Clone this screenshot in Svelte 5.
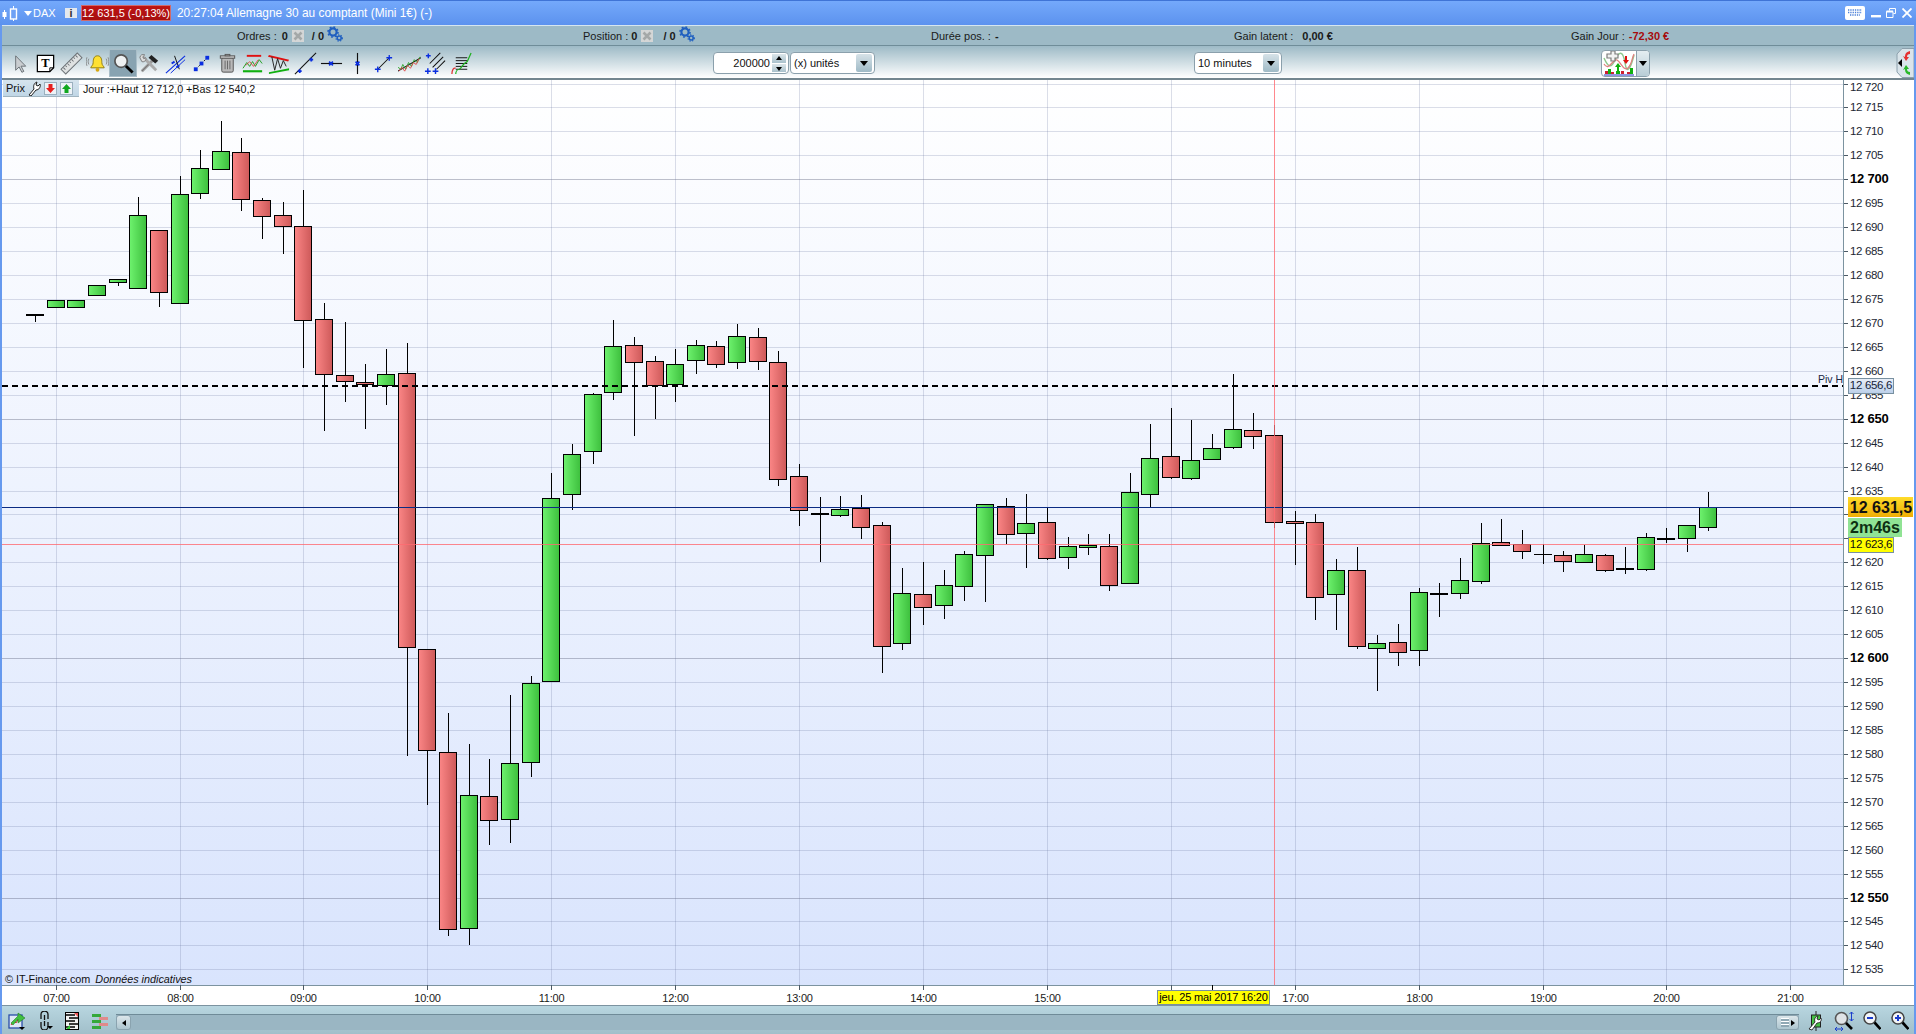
<script>
const candles = [
['d',26,315,315,315,322,35.3],
['g',47.3,300.3,307.7],['g',67.3,300.3,307.7],['g',88.3,285.3,295.7],
['g',109.3,279.3,282.7,279,286,118.3],
['g',129.3,215.3,288.7,197.3,288,138.3],
['r',150.3,230.3,292.7,230,306.7,159.3],
['g',171.3,194.3,303.7,176,303,180.7],
['g',191.3,168.3,193.3,150,199,200.3],
['g',212.3,151.3,169.7,121,169,221.3],
['r',232.3,152.3,199.7,138,211,241.3],
['r',253.3,200.3,216.7,198,239,262.3],
['r',274.3,215.3,226.7,202,254,283.3],
['r',294.3,226.3,320.7,190,368,303.3],
['r',315.3,319.3,374.7,303,431,324.3],
['r',336.3,375.3,381.7,322,402,345.3],
['r',356.3,382.3,384.7,364,429,365.3],
['g',377.3,374.3,385.7,349,405,386.3],
['r',398.3,373.3,647.3,343,755.7,407.3],
['r',418.3,649.3,750.7,649,804.7,427.3],
['r',439.3,752.3,929.7,713,935.7,448.3],
['g',460.3,795.3,928.7,744,944.7,469.3],
['r',480.3,796.3,820.7,759,844.7,489.3],
['g',501.3,763.3,819.7,695,842.7,510.3],
['g',522.3,683.3,762.7,676,776.7,531.3],
['g',542.3,498.3,681.3,473,681,551.3],
['g',563.3,454.3,494.7,444,510,572.3],
['g',584.3,394.3,451.7,393,464,593.3],
['g',604.3,346.3,392.3,320,400,613.3],
['r',625.3,345.3,362.7,337,436,634.3],
['r',646.3,361.3,385.7,356,419,655.3],
['g',666.3,364.3,384.7,349,402,675.3],
['g',687.3,345.3,360.7,340,374,696.3],
['r',707.3,346.3,364.7,341,368,716.3],
['g',728.3,336.3,362.7,324,369,737.3],
['r',749.3,337.3,361.7,328,370,758.3],
['r',769.3,362.3,479.7,351,486,778.3],
['r',790.3,476.3,510.7,464,526,799.3],
['d',811,513.7,513.7,497,562,820.3],
['g',831.3,509.3,515.7,496,517,840.3],
['r',852.3,508,527.7,495,539,861.3],
['r',873.3,525.3,646.7,522,672.7,882.3],
['g',893.3,593.3,643.7,568,650,902.3],
['r',914.3,594.3,607.7,562,625,923.3],
['g',935.3,585.3,605.7,570,619,944.3],
['g',955.3,554.3,586.7,551,601,964.3],
['g',976.3,504.3,555.7,504,602,985.3],
['r',997.3,506.3,534.7,498,544,1006.3],
['g',1017.3,523.3,533.7,494,568,1026.3],
['r',1038.3,522.3,558.7,507,560,1047.3],
['g',1059.3,546.3,557.7,537,569,1068.3],
['g',1079.3,545.3,547.7,534,555,1088.3],
['r',1100.3,546.3,585.7,534,591,1109.3],
['g',1121.3,492.3,583.7,473,583,1130.3],
['g',1141.3,458.3,494.7,424,507,1150.3],
['r',1162.3,456.3,477.7,408,479,1171.3],
['g',1182.3,460.3,478.7,420,480,1191.3],
['g',1203.3,448.3,459.7,434,459,1212.3],
['g',1224.3,429.3,447.7,374,449,1233.3],
['r',1244.3,430.3,436.7,413,449,1253.3],
['r',1265.3,435.3,522.7,425,528,1274.3],
['r',1286.3,521.3,523.7,511,565,1295.3],
['r',1306.3,522.3,597.7,514,620,1315.3],
['g',1327.3,570.3,594.7,559,630,1336.3],
['r',1348.3,570.3,646.7,547,649,1357.3],
['g',1368.3,643.3,648.7,635,690.7,1377.3],
['r',1389.3,642.3,652.7,624,666,1398.3],
['g',1410.3,592.3,650.7,588,666,1419.3],
['d',1430,594,594,583,617,1439.3],
['g',1451.3,580.3,593.7,558,599,1460.3],
['g',1472.3,543.3,581.7,523,584,1481.3],
['r',1492.3,542.3,545.7,519,545,1501.3],
['r',1513.3,544.3,551.7,530,559,1522.3],
['t',1534,554.3,554.3,544,564,1543.3],
['r',1554.3,555.3,561.7,551,572,1563.3],
['g',1575.3,554.3,562.7,545,562,1584.3],
['r',1596.3,555.3,570.7,554,572,1605.3],
['d',1616,569,569,547,574,1625.3],
['g',1637.3,537.3,569.7,533,571,1646.3],
['d',1657,539,539,528,543,1666.3],
['g',1678.3,525.3,538.7,525,552,1687.3],
['g',1699.3,507.3,527.7,492,531,1708.3]
];
const f = (v) => Math.floor(v) + 0.5;
const hours = [[56,'07:00'],[180,'08:00'],[303,'09:00'],[427,'10:00'],[551,'11:00'],[675,'12:00'],[799,'13:00'],[923,'14:00'],[1047,'15:00'],[1171,''],[1295,'17:00'],[1419,'18:00'],[1543,'19:00'],[1666,'20:00'],[1790,'21:00']];
const prices = [];
for (let p = 12720; p >= 12535; p -= 5) {
  const s = String(p);
  prices.push({ p, y: Math.round(179.3 + ((12700 - p) / 5) * 23.94), bold: p % 50 === 0, hidden: p === 12630 || p === 12625, label: s.slice(0, 2) + ' ' + s.slice(2) });
}
</script>

{#snippet gear()}
<svg class="gear" width="16" height="16" viewBox="0 0 16 16"><circle cx="6" cy="6" r="3.6" fill="none" stroke="#1f5fc0" stroke-width="2.2"/><circle cx="6" cy="6" r="5" fill="none" stroke="#1f5fc0" stroke-width="1.6" stroke-dasharray="1.8 2.1"/><circle cx="12.2" cy="12" r="2" fill="none" stroke="#1f5fc0" stroke-width="1.6"/><circle cx="12.2" cy="12" r="3.2" fill="none" stroke="#1f5fc0" stroke-width="1.1" stroke-dasharray="1.3 1.4"/></svg>
{/snippet}
{#snippet xbox()}
<svg width="12" height="12" viewBox="0 0 12 12"><rect width="12" height="12" fill="#d4d6d6"/><path d="M2.500 2.500 9.500 9.500M9.500 2.500 2.500 9.500" stroke="#a4a8a8" stroke-width="2.600"/></svg>
{/snippet}
{#snippet combo()}
<span class="dd"><i></i></span>
{/snippet}

<div class="app">
  <header class="title">
    <svg class="t-ic" width="17" height="18" viewBox="0 0 17 18"><path d="M2.500 6v9" stroke="#fff"/><rect x="0.500" y="8" width="4" height="5" fill="#fff"/><path d="M11.500 2v15" stroke="#fff"/><rect x="8.500" y="5" width="6" height="10" fill="#6ea1f5" stroke="#fff" stroke-width="1.400"/></svg>
    <svg class="t-arrow" width="8" height="5" viewBox="0 0 8 5"><path d="M0 0h8L4 5z" fill="#fff"/></svg>
    <span class="dax">DAX</span>
    <span class="info-i">i</span>
    <span class="pricebox">12 631,5 (-0,13%)</span>
    <span class="t-text">20:27:04 Allemagne 30 au comptant (Mini 1€) (-)</span>
    <span class="t-right">
      <svg width="20" height="14" viewBox="0 0 20 14"><rect width="20" height="14" rx="2" fill="#fff"/><path d="M3 4h14M3 6.500h14M5 9h10" stroke="#4a7fd8" stroke-width="1.400" stroke-dasharray="1.300 1"/></svg>
      <svg class="wc1" width="10" height="10" viewBox="0 0 10 10"><rect y="7" width="10" height="2.400" fill="#fff"/></svg>
      <svg class="wc2" width="10" height="10" viewBox="0 0 10 10"><path d="M3.500 2.500V.5h6v5H7.500M.5 3.500h6.500v6H.5z" fill="none" stroke="#fff"/><path d="M.5 3.500h6.500" stroke="#fff" stroke-width="2"/></svg>
      <svg class="wc3" width="10" height="10" viewBox="0 0 10 10"><path d="M.5.5l9 9M9.500.5l-9 9" stroke="#fff" stroke-width="1.800"/></svg>
    </span>
  </header>

  <div class="frame">
    <div class="infobar">
      <div class="cell c1"><span>Ordres :</span><b class="n1">0</b>{@render xbox()}<b class="sl">/ 0</b>{@render gear()}</div>
      <div class="cell c2"><span>Position :</span><b class="n2">0</b>{@render xbox()}<b class="sl2">/ 0</b>{@render gear()}</div>
      <div class="cell c3"><span>Durée pos. :</span><b class="n3">-</b></div>
      <div class="cell c4"><span>Gain latent :</span><b class="n4">0,00 €</b></div>
      <div class="cell"><span>Gain Jour :</span><b class="n5">-72,30 €</b></div>
    </div>

    <div class="toolbar">
      <div class="tools">
        <div class="tool"><svg viewBox="0 0 24 24"><path d="M8 4v15l3.600-3.400 2.900 5.600 2-1-2.900-5.400H18.500z" fill="#c9cdd0" stroke="#6a7176"/></svg></div>
        <div class="tool"><svg viewBox="0 0 24 24"><path d="M3.500 3.500h17v13l-4 4h-13z" fill="#fff" stroke="#000" stroke-width="1.300"/><path d="M16.500 20.500v-4h4" fill="none" stroke="#000"/><text x="12" y="16" class="tt">T</text></svg></div>
        <div class="tool"><svg viewBox="0 0 24 24"><g transform="rotate(-45 12 12)"><rect x="0" y="8.500" width="24" height="7" fill="#dfe2e2" stroke="#6d7377"/><path d="M3 9v3M6 9v2M9 9v3M12 9v2M15 9v3M18 9v2M21 9v3" stroke="#6d7377"/></g></svg></div>
        <div class="tool"><svg viewBox="0 0 24 24"><path d="M12 4c-4 0-4.500 4-4.500 7 0 3-2.500 4-2.500 5.500h14c0-1.500-2.500-2.500-2.500-5.500 0-3-.5-7-4.500-7z" fill="#ffe032" stroke="#8d7a10"/><circle cx="12" cy="18.500" r="2" fill="#d8a810"/><path d="M3 7c-1 2-1 4 0 6M1 5.500c-1 3-1 6 0 9M21 7c1 2 1 4 0 6M23 5.500c1 3 1 6 0 9" stroke="#777" fill="none" stroke-width=".8"/></svg></div>
        <div class="tool active"><svg viewBox="0 0 24 24"><circle cx="9.500" cy="9.500" r="6.500" fill="#eef1f2" stroke="#555" stroke-width="1.800"/><path d="M14.500 14.500l7 7" stroke="#000" stroke-width="3"/></svg></div>
        <div class="tool"><svg viewBox="0 0 24 24"><path d="M4 20 17 7" stroke="#999" stroke-width="3"/><path d="M14 3l7 6-3 3-7-6z" fill="#222"/><path d="M5 5l14 14" stroke="#aaa" stroke-width="3"/><path d="M2 6c0-3 3-4 5-3L5 5l1 2 2-1c1 2-1 5-4 4z" fill="#ddd" stroke="#666" stroke-width=".8"/><path d="M4 20 11 13" stroke="#777" stroke-width="1"/></svg></div>
        <div class="tool"><svg viewBox="0 0 24 24"><path d="M2 22 22 4" stroke="#0a2ee0" stroke-width="1.200"/><path d="M7 22 22 8" stroke="#0a2ee0" stroke-width="1"/><path d="M11 4l5 14" stroke="#111"/><path d="M8 12l3-2M13 16l3-2" stroke="#0a2ee0" stroke-width="2"/></svg></div>
        <div class="tool"><svg viewBox="0 0 24 24"><path d="M6 18 18 6" stroke="#111" stroke-dasharray="2 2"/><rect x="4" y="16" width="4" height="4" fill="#0a2ee0"/><rect x="10" y="10" width="4" height="4" fill="#0a2ee0"/><rect x="16" y="4" width="4" height="4" fill="#0a2ee0"/></svg></div>
        <div class="tool"><svg viewBox="0 0 24 24"><rect x="6" y="6" width="12" height="15" rx="1.500" fill="#b9b9b9" stroke="#555"/><path d="M9.500 9v9M12 9v9M14.500 9v9" stroke="#666"/><rect x="4.500" y="4" width="15" height="2.500" fill="#ccc" stroke="#555"/><rect x="9.500" y="2.500" width="5" height="1.500" fill="#ccc" stroke="#555"/></svg></div>
        <div class="tool"><svg viewBox="0 0 24 24"><rect x="5" y="3" width="15" height="2" fill="#e01010"/><rect x="1" y="19" width="20" height="2.200" fill="#10b010"/><path d="M1 17l4-6 3 4 3-5 3 5 4-7 3 4" fill="none" stroke="#20a020"/><path d="M4 14l4-4 4 5 5-7" fill="none" stroke="#e04040" stroke-width=".9"/></svg></div>
        <div class="tool"><svg viewBox="0 0 24 24"><path d="M1 3l21 5-1 2L0 5z" fill="#e01010"/><path d="M1 21l21-4v2L1 23z" fill="#10b010"/><path d="M4 5l3 14 3-12 3 10 3-8 3 6" fill="none" stroke="#222"/></svg></div>
        <div class="tool"><svg viewBox="0 0 24 24"><path d="M1 23 23 1" stroke="#111" stroke-width="1.100"/><path d="M4 20h4M6 18v4M16 8h4M18 6v4" stroke="#0a2ee0" stroke-width="1.800"/></svg></div>
        <div class="tool"><svg viewBox="0 0 24 24"><path d="M1 12h22" stroke="#111" stroke-width="1.200"/><path d="M9.500 10l4 4M13.500 10l-4 4" stroke="#0a2ee0" stroke-width="1.800"/></svg></div>
        <div class="tool"><svg viewBox="0 0 24 24"><path d="M12 1v22" stroke="#111" stroke-width="1.200"/><path d="M10 10l4 4M14 10l-4 4" stroke="#0a2ee0" stroke-width="1.800"/></svg></div>
        <div class="tool"><svg viewBox="0 0 24 24"><path d="M6 18 18 6" stroke="#111" stroke-width="1.100"/><path d="M3 18h6M6 15v6M15 6h6M18 3v6" stroke="#0a2ee0" stroke-width="1.400"/></svg></div>
        <div class="tool"><svg viewBox="0 0 24 24"><path d="M0 20 24 6" stroke="#111" stroke-width="1.100"/><path d="M0 16l3 2 2-5 3 5 3-7 3 4 3-7 3 3 3-6" fill="none" stroke="#20a020" stroke-width=".9"/><path d="M1 20l3-4 3 4 3-6 3 3 3-6 3 2 3-6" fill="none" stroke="#e04040" stroke-width=".9"/></svg></div>
        <div class="tool"><svg viewBox="0 0 24 24"><path d="M6 12 17 1M9 16 20 5M13 18 22 9" stroke="#111" stroke-width="1.100"/><path d="M1 20h6M4 17v6M9 20h6M12 17v6M2 4h5M4.500 1.500v5" stroke="#0a2ee0" stroke-width="1.500"/></svg></div>
        <div class="tool"><svg viewBox="0 0 24 24"><path d="M6 6h12M6 9h12M6 12h12M6 15h12M6 18h12" stroke="#111"/><path d="M10 18c2-2 3-4 5-6l3-2 4-9" fill="none" stroke="#20b020" stroke-width="1.300"/><path d="M2 23c0-5 2-7 4-6" fill="none" stroke="#e03030" stroke-width="1.300"/><path d="M6 23c0-3 2-5 4-5" fill="none" stroke="#20b020" stroke-width="1.300"/></svg></div>
      </div>

      <div class="qty"><span class="qv">200000</span><span class="spin"><i class="up"></i><i class="down"></i></span></div>
      <div class="select s1"><span>(x) unités</span>{@render combo()}</div>
      <div class="select s2"><span>10 minutes</span>{@render combo()}</div>
      <div class="indic">
        <span class="ind-ic"><svg width="32" height="26" viewBox="0 0 32 26"><path d="M1 8C5 17 8 19 12 10s8-10 10 3 6 4 9-8" fill="none" stroke="#8fc98f" stroke-width="1.500"/><path d="M1 14C6 22 10 8 14 10s7 12 11 8 4-10 6-14" fill="none" stroke="#e08080" stroke-width="1.300"/><path d="M4 4h4V1h4v3h3v4h-3v3H8V8H4z" fill="#f2f2f2" stroke="#7c7c7c" stroke-width="1.200"/><path d="M12 17l3-4 3 4h-2v4h-2v-4z" fill="#10b010"/><path d="M22 6h2v4h2l-3 4-3-4h2z" fill="#e01010"/><path d="M2 21h3v3H2zM8 22h3v2H8zM18 21h3v3h-3zM24 22h3v2h-3z" fill="#d02030"/><path d="M5 19h3v5H5zM13 21h4v3h-4zM27 18h3v6h-3z" fill="#10b010"/><path d="M1 25h30" stroke="#2030c0"/></svg></span>
        <span class="ind-dd"><i></i></span>
      </div>
      <div class="sidetab"><svg width="18" height="30" viewBox="0 0 18 30"><path d="M6 .5h12v29H6L1 24V6z" fill="#d9e4ea" stroke="#8ca0ac"/><path d="M2 15l4-4v8z" fill="#000"/><path d="M14 3c-4 1-5 3-5 6l-2-1 3 5 3-4-2 0c0-2 1-3 3-3z" fill="#e53030"/><path d="M14 27c-4-1-5-3-5-6l-2 1 3-5 3 4-2 0c0 2 1 3 3 3z" fill="#28b828"/></svg></div>
    </div>

    <div class="chartrow">
      <div class="plot">
        <svg class="plotsvg" width="1841" height="905" viewBox="2 80 1841 905">
          <defs>
            <linearGradient id="gg"><stop offset="0" stop-color="#6ef26e"/><stop offset="1" stop-color="#3dbf3d"/></linearGradient>
            <linearGradient id="gr"><stop offset="0" stop-color="#fb8686"/><stop offset="1" stop-color="#cd5959"/></linearGradient>
          </defs>
          {#each prices as g}
            <line x1="2" x2="1843" y1={g.y + 0.5} y2={g.y + 0.5} class={g.bold ? 'gl b' : 'gl'} />
          {/each}
          {#each hours as h}
            <line x1={h[0] + 0.5} x2={h[0] + 0.5} y1="80" y2="985" class="gl" />
          {/each}
          {#each candles as c}
            {@const t = c[0]}
            {#if c[6]}
              <line x1={f(c[6])} x2={f(c[6])} y1={Math.floor(Math.min(c[4], c[2]))} y2={Math.ceil(Math.max(c[5], c[3]))} class="wick" />
            {/if}
            {#if t === 'd'}
              <rect x={Math.round(c[1])} y={Math.round(c[2]) - 1} width="18" height="2" fill="#000" />
            {:else if t === 't'}
              <rect x={Math.round(c[1])} y={Math.floor(c[2])} width="18" height="1" fill="#000" />
            {:else}
              <rect x={f(c[1])} y={f(c[2])} width="17" height={Math.max(f(c[3]) - f(c[2]), 1)} fill={t === 'g' ? 'url(#gg)' : 'url(#gr)'} class="body" />
            {/if}
          {/each}
          <line x1="2" x2="1843" y1="385.500" y2="385.500" class="pivot" />
          <line x1="2" x2="1843" y1="386.500" y2="386.500" class="pivot" />
          <line x1="2" x2="1843" y1="507.500" y2="507.500" class="last" />
          <line x1="2" x2="1843" y1="544.500" y2="544.500" class="pink" />
          <line x1="1274.500" x2="1274.500" y1="80" y2="985" class="pink" />
        </svg>

        <div class="legend">
          <div class="prix">
            <span>Prix</span>
            <svg class="wrench" width="13" height="15" viewBox="0 0 13 15"><path d="M1 14l5-6c-1-3 0-6 3-7l-1 3 2 1 2-2c1 3-1 6-4 6l-5 6z" fill="#fff" stroke="#222"/></svg>
            <span class="mini"><svg width="11" height="11" viewBox="0 0 11 11"><path d="M3.500 1h4v4H10L5.500 10 1 5h2.500z" fill="#e52020"/></svg></span>
            <span class="mini"><svg width="11" height="11" viewBox="0 0 11 11"><path d="M3.500 10h4V6H10L5.500 1 1 6h2.500z" fill="#10a820"/></svg></span>
          </div>
          <span class="leg-text">Jour :+Haut 12 712,0 +Bas 12 540,2</span>
        </div>
        <div class="copy">© IT-Finance.com <em>Données indicatives</em></div>
        <div class="piv">Piv H</div>
      </div>

      <div class="yaxis">
        <svg width="70" height="905" viewBox="1844 80 70 905">
          {#each prices as g}
            <line x1="1844" x2="1848" y1={g.y + 0.5} y2={g.y + 0.5} class="tick" />
            {#if !g.hidden}
              <text x="1850" y={(g.p === 12720 ? g.y + 3 : g.y) + (g.bold ? 4 : 3.5)} class={g.bold ? 'yl b' : 'yl'}>{g.label}</text>
            {/if}
          {/each}
        </svg>
        <div class="tag tag-piv">12 656,6</div>
        <div class="tag-last">12 631,5</div>
        <div class="tag-time">2m46s</div>
        <div class="tag tag-yel">12 623,6</div>
      </div>
    </div>

    <div class="xaxis">
      <svg width="1912" height="20" viewBox="2 985 1912 20">
        {#each hours as h}
          <line x1={h[0] + 0.5} x2={h[0] + 0.5} y1="985" y2="990" class="tick" />
          {#if h[1]}<text x={h[0] + 0.5} y="1002" class="xl">{h[1]}</text>{/if}
        {/each}
        <line x1="1212.500" x2="1212.500" y1="985" y2="990" stroke="#000" />
      </svg>
      <div class="datetip">jeu. 25 mai 2017 16:20</div>
    </div>

    <footer class="bottom">
      <div class="b-left">
        <svg width="18" height="19" viewBox="0 0 18 19"><rect x="1" y="4" width="13" height="13" fill="#dfe9f6" stroke="#2a4fa8" stroke-width="1.300"/><path d="M3 14l3-4 2 2 3-5" fill="none" stroke="#d03030"/><path d="M3 12 10 5V2l7 5-7 5V8l-5 6z" fill="#40c040" stroke="#208020" stroke-width=".6"/><path d="M11 16h6l-3 3z" fill="#000"/></svg>
        <svg class="b2" width="16" height="19" viewBox="0 0 16 19"><path d="M3 8V3.500a3 3 0 0 1 7 0V8M6.500 4v5M3 11v4.500a3.300 3.300 0 0 0 7 0V11M6.500 10v5" fill="none" stroke="#111" stroke-width="1.300"/><path d="M9 15h6l-3 3z" fill="#000"/></svg>
        <svg class="b3" width="14" height="18" viewBox="0 0 14 18"><rect width="14" height="18" fill="#000"/><rect x="1" y="1" width="12" height="16" fill="#f2f2f2"/><path d="M1 3h9M4 6h9M1 9h9M4 12h9M1 15h9" stroke="#000" stroke-width="1.400"/><path d="M9 1h4v4z" fill="#e55"/><path d="M1 17l4-4v4z" fill="#3c3"/></svg>
        <svg class="b4" width="16" height="18" viewBox="0 0 16 18"><path d="M0 2h9v3H0zM0 8h9v3H0zM0 14h9v3H0z" fill="#35a83a"/><path d="M7 5h9v3H7zM7 11h9v3H7z" fill="#e08a8a"/></svg>
      </div>
      <div class="track">
        <span class="sbtn"><i class="al"></i></span>
        <span class="thumb"><span class="grip"></span><i class="ar"></i></span>
      </div>
      <div class="b-right">
        <svg width="16" height="20" viewBox="0 0 16 20"><path d="M8 0v20" stroke="#222"/><rect x="3.500" y="4" width="9" height="12" fill="#45c045" stroke="#222"/><path d="M1 18l6-7c-1-3 0-5 3-6l-1 3 2 1 2-2c1 3-1 5-4 5l-5 7z" fill="#fff" stroke="#222" stroke-width=".9"/></svg>
        <svg class="r2" width="20" height="20" viewBox="0 0 20 20"><circle cx="7.500" cy="7.500" r="6" fill="#dfe3e6" stroke="#555" stroke-width="1.600"/><path d="M12 12l6 6" stroke="#000" stroke-width="2.600"/><path d="M17.500 1v9M15.500 3l2-2 2 2M15.500 8l2 2 2-2M1 18h8M3 16l-2 2 2 2M7 16l2 2-2 2" fill="none" stroke="#1a3ccc"/></svg>
        <svg class="r3" width="18" height="20" viewBox="0 0 18 20"><circle cx="7" cy="7" r="6" fill="#f3f5f6" stroke="#444" stroke-width="1.500"/><path d="M4 7h6" stroke="#1a3ccc" stroke-width="2"/><path d="M11.500 11.500l6 6.500" stroke="#000" stroke-width="2.600"/></svg>
        <svg class="r4" width="18" height="20" viewBox="0 0 18 20"><circle cx="7" cy="7" r="6" fill="#f3f5f6" stroke="#444" stroke-width="1.500"/><path d="M4 7h6M7 4v6" stroke="#1a3ccc" stroke-width="2"/><path d="M11.500 11.500l6 6.500" stroke="#000" stroke-width="2.600"/></svg>
      </div>
    </footer>
  </div>
</div>

<style>
:global(body) { margin: 0; overflow: hidden; background: #6699ee; }
.app { width: 1916px; height: 1034px; display: flex; flex-direction: column; font: 11px "Liberation Sans", Arial, sans-serif; color: #111; }
svg { display: block; flex: none; }

.title { height: 25px; box-sizing: border-box; flex: none; display: flex; align-items: center; padding-left: 2px; color: #fff; border-top: 1px solid #3f74d6; background: linear-gradient(#74a9fb, #5c92ee); }
.t-arrow { margin-left: 5px; }
.dax { margin-left: 1px; width: 32px; }
.info-i { width: 12px; height: 10px; background: #e4e8ee; color: #333; font-weight: bold; text-align: center; line-height: 10px; }
.pricebox { margin-left: 4px; width: 90px; height: 16px; line-height: 16px; text-align: center; background: linear-gradient(#c01414, #a40e0e); font-size: 11px; outline: 1px solid #d06a6a; outline-offset: -1px; white-space: nowrap; }
.t-text { margin-left: 6px; white-space: nowrap; font-size: 11.900px; }
.t-right { margin-left: auto; margin-right: 4px; display: flex; align-items: center; }
.wc1 { margin-left: 6px; }
.wc2 { margin-left: 5px; }
.wc3 { margin-left: 6px; }

.frame { flex: 1; display: flex; flex-direction: column; padding: 0 2px; background: #6699ee; min-height: 0; }
.infobar { height: 21px; flex: none; display: grid; grid-template-columns: 346px 348px 303px 337px 1fr; align-items: center; padding-left: 235px; border-top: 1px solid #d6e6f0; border-bottom: 1px solid #6f8d99; background: #9dbac6; box-sizing: border-box; }
.cell { display: flex; align-items: center; white-space: nowrap; color: #1a1a1a; }
.cell b { font-weight: bold; }
.n1 { margin: 0 4px 0 5px; }
.n2 { margin: 0 4px 0 3px; }
.n3 { margin-left: 4px; }
.n4 { margin-left: 9px; }
.n5 { margin-left: 4px; color: #a60b0b; }
.sl { margin: 0 3px 0 8px; }
.sl2 { margin: 0 3px 0 10px; }
.gear { margin-top: -3px; }

.toolbar { height: 34px; flex: none; display: flex; align-items: center; box-sizing: border-box; border-bottom: 2px solid #73868f; background: linear-gradient(#9dbac6, #fff); padding: 2px 0 0 4px; position: relative; }
.tools { display: flex; width: 467px; flex: none; }
.tool { width: 26px; height: 26px; flex: none; display: flex; align-items: center; justify-content: center; box-sizing: border-box; }
.tool svg { width: 23px; height: 23px; }
.tool.active { background: #88a3b1; outline: 1px solid #a9bec8; }
.tt { font: bold 13px "Liberation Serif", serif; text-anchor: middle; fill: #000; }
.qty { margin-left: 240px; width: 76px; height: 22px; box-sizing: border-box; border: 1px solid #8ba0ac; border-radius: 4px; background: #fff; display: flex; align-items: center; justify-content: flex-end; }
.spin { width: 14px; height: 18px; margin: 0 2px; display: flex; flex-direction: column; gap: 1px; }
.spin i { flex: 1; background: linear-gradient(#dce6ea, #a9c1cc); position: relative; }
.up::after { content: ""; position: absolute; left: 4px; top: 2px; border: 3px solid transparent; border-top: 0; border-bottom: 4px solid #000; }
.down::after { content: ""; position: absolute; left: 4px; top: 3px; border: 3px solid transparent; border-bottom: 0; border-top: 4px solid #000; }
.select { height: 22px; box-sizing: border-box; border: 1px solid #8ba0ac; border-radius: 4px; background: #fff; display: flex; align-items: center; justify-content: space-between; padding: 0 2px 0 3px; }
.s1 { width: 85px; margin-left: 1px; }
.s2 { width: 88px; margin-left: 319px; }
.dd { width: 16px; height: 18px; background: linear-gradient(#d6e2e8, #9fbac6); border-radius: 2px; display: flex; align-items: center; justify-content: center; }
.dd i, .ind-dd i { width: 0; height: 0; border: 4px solid transparent; border-bottom: 0; border-top: 5px solid #000; }
.indic { margin-left: 319px; width: 49px; height: 27px; box-sizing: border-box; border: 1px solid #8ba0ac; border-radius: 4px; display: flex; background: #fff; overflow: hidden; }
.ind-ic { width: 34px; display: flex; align-items: center; justify-content: center; border-right: 1px solid #8ba0ac; }
.ind-dd { flex: 1; display: flex; align-items: center; justify-content: center; background: linear-gradient(#e4edf1, #b9cdd6); }
.sidetab { position: absolute; right: 0; top: 2px; }

.chartrow { height: 905px; flex: none; display: flex; background: #fff; }
.plot { width: 1841px; height: 905px; position: relative; flex: none; background: linear-gradient(#fff, #d9e4fd); }
.gl { stroke: rgba(105, 115, 160, 0.24); stroke-width: 1; }
.gl.b { stroke: rgba(95, 100, 125, 0.4); }
.wick { stroke: #000; stroke-width: 1; }
.body { stroke: #000; stroke-width: 1; }
.pivot { stroke: #000; stroke-width: 1; stroke-dasharray: 6 4; }
.last { stroke: #0b2b83; stroke-width: 1; }
.pink { stroke: #ff6a70; stroke-opacity: 0.8; stroke-width: 1; }

.legend { position: absolute; left: 1px; top: 0; display: flex; align-items: center; }
.prix { width: 76px; height: 17px; box-sizing: border-box; display: flex; align-items: center; padding-left: 3px; background: linear-gradient(#d6e4ee, #c0d6e6); border-bottom: 1px solid #a0b4c0; }
.wrench { margin-left: 3px; }
.mini { width: 13px; height: 13px; background: #eef3f8; border: 1px solid #9bb0bf; box-sizing: border-box; margin-left: 3px; display: flex; align-items: center; justify-content: center; }
.leg-text { margin-left: 4px; white-space: nowrap; font-size: 10.700px; }
.copy { position: absolute; left: 3px; bottom: 0; white-space: nowrap; font-size: 10.800px; }
.copy em { margin-left: 2px; }
.piv { position: absolute; right: 0; top: 293px; color: #1b2a46; font-size: 10.500px; }

.yaxis { width: 71px; height: 905px; position: relative; flex: none; background: #fff; border-left: 1px solid #7c93a0; box-sizing: border-box; }
.tick { stroke: #4c5a66; stroke-width: 1; }
.yl { font: 11.500px "Liberation Sans", Arial, sans-serif; fill: #1c2733; letter-spacing: -0.35px; }
.yl.b { font-weight: bold; font-size: 13px; fill: #000; letter-spacing: -0.2px; }
.tag { position: absolute; left: 4px; width: 46px; height: 16px; box-sizing: border-box; border: 1px solid #7890a0; font-size: 11.500px; line-height: 13px; text-align: center; letter-spacing: -0.3px; }
.tag-piv { top: 298px; background: linear-gradient(#e8eef8, #bcd0ea); color: #17233a; }
.tag-yel { top: 457px; background: #ffff00; color: #111; }
.tag-last { position: absolute; left: 4px; top: 417px; width: 65px; height: 20px; line-height: 21px; padding-left: 1px; box-sizing: border-box; font-size: 16px; font-weight: bold; text-align: center; color: #111; background: linear-gradient(#ffdc2a, #efae05); white-space: nowrap; }
.tag-time { position: absolute; left: 4px; top: 438px; width: 54px; height: 19px; line-height: 20px; font-size: 16px; font-weight: bold; text-align: center; color: #0d3013; background: #90e394; }

.xaxis { height: 21px; flex: none; position: relative; background: #fff; border-top: 1px solid #7c93a0; border-bottom: 1px solid #7c93a0; box-sizing: border-box; }
.xaxis svg { margin-top: -1px; }
.xl { font: 11px "Liberation Sans", Arial, sans-serif; fill: #1a1a1a; text-anchor: middle; letter-spacing: -0.2px; }
.datetip { position: absolute; left: 1155px; top: 4px; width: 113px; height: 15px; box-sizing: border-box; border: 1px solid #7890a0; background: #ffff00; line-height: 13px; text-align: center; white-space: nowrap; font-size: 11px; color: #000; letter-spacing: -0.15px; }

.bottom { height: 29px; flex: none; display: flex; align-items: center; box-sizing: border-box; background: linear-gradient(#b8d6e0, #a0bec9); }
.b-left { display: flex; align-items: center; padding-left: 6px; width: 114px; flex: none; box-sizing: border-box; }
.b2 { margin-left: 12px; }
.b3 { margin-left: 11px; }
.b4 { margin-left: 13px; }
.track { width: 1683px; height: 16px; margin-top: 3px; flex: none; display: flex; justify-content: space-between; background: #9ab6c3; border-top: 1px solid #6f8b98; box-sizing: border-box; }
.sbtn, .thumb { height: 15px; display: flex; align-items: center; justify-content: center; background: linear-gradient(#dbe6ea, #aec6d0); border-radius: 3px; border: 1px solid #8aa3af; box-sizing: border-box; }
.sbtn { width: 15px; }
.thumb { width: 23px; gap: 2px; }
.grip { width: 8px; height: 9px; background: repeating-linear-gradient(#fff 0 1px, #8fa8b4 1px 3px); }
.al { border: 3px solid transparent; border-left: 0; border-right: 4px solid #000; }
.ar { border: 3px solid transparent; border-right: 0; border-left: 4px solid #000; }
.b-right { display: flex; align-items: center; margin-left: 9px; }
.r2 { margin-left: 10px; }
.r3 { margin-left: 9px; }
.r4 { margin-left: 10px; }
</style>
